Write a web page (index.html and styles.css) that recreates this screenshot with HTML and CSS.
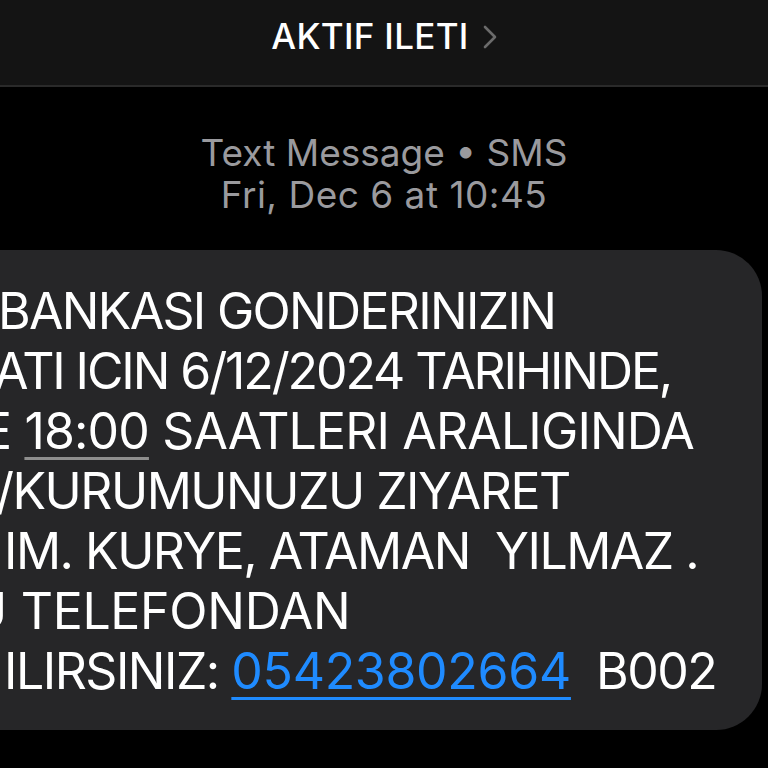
FILE: index.html
```html
<!DOCTYPE html>
<html lang="tr">
<head>
<meta charset="utf-8">
<title>Messages</title>
<link rel="stylesheet" href="styles.css">
</head>
<body>
<div class="screen">
  <header class="topbar">
    <span class="title">AKTIF ILETI</span>
    <svg class="chev" width="14" height="24" viewBox="0 0 14 24"><path d="M2 2 L12 12 L2 22" fill="none" stroke="#6b6b6b" stroke-width="2.6" stroke-linecap="round" stroke-linejoin="round"/></svg>
  </header>
  <div class="meta">
    <div>Text Message • SMS</div>
    <div class="date">Fri, Dec 6 at 10:45</div>
  </div>
  <div class="bubble">
    <div class="line l1">BANKASI GONDERINIZIN</div>
    <div class="line l2">ATI ICIN 6/12/2024 TARIHINDE,</div>
    <div class="line l3">E <span class="time">18:00</span> SAATLERI ARALIGINDA</div>
    <div class="line l4">/KURUMUNUZU ZIYARET</div>
    <div class="line l5">IM. KURYE, ATAMAN&nbsp; YILMAZ .</div>
    <div class="line l6">U TELEFONDAN</div>
    <div class="line l7">ILIRSINIZ: <span class="link">05423802664</span>&nbsp; B002</div>
  </div>
</div>
</body>
</html>
```
FILE: styles.css
```css
html, body {
  margin: 0;
  padding: 0;
  background: #000;
}
.screen {
  width: 768px;
  height: 768px;
  overflow: hidden;
  background: #000;
  font-family: Inter, "Noto Sans", "Liberation Sans", sans-serif;
  color: #fff;
}
.topbar {
  height: 87px;
  box-sizing: border-box;
  background: #141414;
  border-bottom: 2px solid #2a2a2a;
  display: flex;
  justify-content: center;
  align-items: center;
  gap: 14px;
  padding-bottom: 14px;
}
.title {
  font-size: 35px;
  font-weight: 500;
  letter-spacing: 0.3px;
}
.chev {
  margin-top: 2px;
}
.meta {
  margin-top: 45px;
  text-align: center;
  color: #9a9a9e;
  font-size: 37px;
  line-height: 42px;
}
.date {
  letter-spacing: 0.5px;
}
.bubble {
  margin: 34px 6px 0 -60px;
  padding: 31px 40px 29px 60px;
  background: #262628;
  border-radius: 46px;
  overflow: hidden;
}
.line {
  font-size: 50px;
  line-height: 60px;
  letter-spacing: -1.5px;
  white-space: nowrap;
}
.l1 { margin-left: -2px; letter-spacing: -1.7px; }
.l2 { margin-left: -6px; letter-spacing: -2.1px; }
.l3 { margin-left: -18px; letter-spacing: -0.85px; }
.l4 { margin-left: -4px; }
.l5 { margin-left: 4px; }
.l6 { margin-left: -30px; letter-spacing: -0.3px; }
.l7 { margin-left: 4px; }
.time {
  text-decoration: underline;
  text-decoration-color: #8e8e8e;
  text-decoration-thickness: 3px;
  text-underline-offset: 8px;
}
.link {
  color: #1f8bff;
  letter-spacing: -0.3px;
  text-decoration: underline;
  text-decoration-thickness: 3px;
  text-underline-offset: 8px;
}
```
